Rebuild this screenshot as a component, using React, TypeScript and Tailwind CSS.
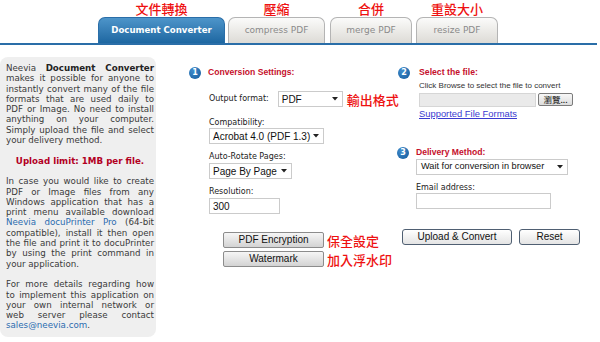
import React from "react";

const vd = "font-['DejaVu_Sans',sans-serif]";
const ar = "font-['Liberation_Sans',Arial,sans-serif]";
const cjk = "font-['Noto_Sans_CJK_TC','Noto_Sans_CJK_SC',sans-serif]";

function Arrow() {
  return (
    <svg width="6" height="4" viewBox="0 0 6 4" className="shrink-0">
      <path d="M0 0H6L3 3.5Z" fill="#222" />
    </svg>
  );
}

function Circle({ n }: { n: string }) {
  return (
    <div
      className={`w-[12px] h-[12px] rounded-full bg-radial-[at_35%_30%] from-[#3f8ccc] to-[#145a9c] text-white text-[8px] font-bold leading-none flex items-center justify-center shrink-0 ${vd}`}
    >
      {n}
    </div>
  );
}

function Line({ children, last }: { children: React.ReactNode; last?: boolean }) {
  return (
    <div className={last ? "text-left" : "text-justify [text-align-last:justify]"}>{children}</div>
  );
}

export default function App() {
  return (
    <div className="w-[600px] h-[342px] bg-white overflow-hidden">
      {/* Header with tabs */}
      <div className="w-[597px] h-[45px] border-b-2 border-[#2a6ea8] flex items-end pl-[98px]">
        <div className="flex flex-col items-center">
          <div className={`h-[17px] text-[13px] leading-[17px] font-medium text-[#ee1111] ${cjk}`}>文件轉換</div>
          <div
            className={`w-[127px] h-[26px] rounded-t-[7px] bg-linear-to-b from-[#4d95ca] to-[#1d67a1] border border-b-0 border-[#2a6ea8] flex items-center justify-center text-white font-bold text-[8.6px] ${vd}`}
          >
            Document Converter
          </div>
        </div>
        <div className="flex flex-col items-center ml-[3px]">
          <div className={`h-[17px] text-[13px] leading-[17px] font-medium text-[#ee1111] ${cjk}`}>壓縮</div>
          <div
            className={`w-[97px] h-[26px] rounded-t-[7px] bg-linear-to-b from-[#fbfbfa] to-[#dddbd6] border border-b-0 border-[#b4b4b4] flex items-center justify-center text-[#8a8a8a] text-[9px] ${vd}`}
          >
            compress PDF
          </div>
        </div>
        <div className="flex flex-col items-center ml-[5px]">
          <div className={`h-[17px] text-[13px] leading-[17px] font-medium text-[#ee1111] ${cjk}`}>合併</div>
          <div
            className={`w-[82px] h-[26px] rounded-t-[7px] bg-linear-to-b from-[#fbfbfa] to-[#dddbd6] border border-b-0 border-[#b4b4b4] flex items-center justify-center text-[#8a8a8a] text-[9px] ${vd}`}
          >
            merge PDF
          </div>
        </div>
        <div className="flex flex-col items-center ml-[4px]">
          <div className={`h-[17px] text-[13px] leading-[17px] font-medium text-[#ee1111] ${cjk}`}>重設大小</div>
          <div
            className={`w-[82px] h-[26px] rounded-t-[7px] bg-linear-to-b from-[#fbfbfa] to-[#dddbd6] border border-b-0 border-[#b4b4b4] flex items-center justify-center text-[#8a8a8a] text-[9px] ${vd}`}
          >
            resize PDF
          </div>
        </div>
      </div>

      {/* Body */}
      <div className="flex">
        {/* Left info panel */}
        <div
          className={`w-[156px] h-[280px] shrink-0 mt-[12px] bg-[#efefef] rounded-[8px] pl-[6px] pr-[2px] pt-[6px] text-[8.7px] leading-[10.3px] text-[#3a3a3a] ${vd}`}
        >
          <div className="mb-[10.3px]">
            <Line>
              Neevia <b className="text-[#222]">Document Converter</b>
            </Line>
            <Line>makes it possible for anyone to</Line>
            <Line>instantly convert many of the file</Line>
            <Line>formats that are used daily to</Line>
            <Line>PDF or Image. No need to install</Line>
            <Line>anything on your computer.</Line>
            <Line>Simply upload the file and select</Line>
            <Line last>your delivery method.</Line>
          </div>
          <div className="mb-[10.3px] text-center font-bold text-[#b3001f]">Upload limit: 1MB per file.</div>
          <div className="mb-[10.3px]">
            <Line>In case you would like to create</Line>
            <Line>PDF or Image files from any</Line>
            <Line>Windows application that has a</Line>
            <Line>print menu available download</Line>
            <Line>
              <span className="text-[#2b6cb0]">Neevia docuPrinter Pro</span> (64-bit
            </Line>
            <Line>compatible), install it then open</Line>
            <Line>the file and print it to docuPrinter</Line>
            <Line>by using the print command in</Line>
            <Line last>your application.</Line>
          </div>
          <div>
            <Line>For more details regarding how</Line>
            <Line>to implement this application on</Line>
            <Line>your own internal network or</Line>
            <Line>web server please contact</Line>
            <Line last>
              <span className="text-[#2b6cb0]">sales@neevia.com</span>.
            </Line>
          </div>
        </div>

        {/* Right form */}
        <div className="pl-[33px]">
          <div className="flex">
            {/* Column 1 */}
            <div className="w-[208px] shrink-0 flex flex-col">
              <div className="mt-[21px] h-[13px] flex items-center">
                <Circle n="1" />
                <span className={`ml-[7px] text-[8.6px] font-bold text-[#c5102c] whitespace-nowrap ${ar}`}>Conversion Settings:</span>
              </div>
              <div className="mt-[12px] h-[16px] ml-[20px] flex items-center whitespace-nowrap">
                <span className={`shrink-0 text-[8px] text-[#222] ${vd}`}>Output format:</span>
                <div className={`shrink-0 ml-[9px] w-[65px] h-[16px] border border-[#cbcbcb] bg-white flex items-center justify-between pl-[3px] pr-[4px] text-[10px] text-[#111] ${ar}`}>
                  <span>PDF</span>
                  <Arrow />
                </div>
                <span className={`shrink-0 ml-[4px] text-[13px] leading-none font-medium text-[#ee1111] ${cjk}`}>輸出格式</span>
              </div>
              <div className={`mt-[11px] ml-[20px] h-[10px] leading-[10px] text-[8px] text-[#222] ${vd}`}>Compatibility:</div>
              <div className={`ml-[20px] w-[115px] h-[16px] border border-[#cbcbcb] bg-white flex items-center justify-between pl-[3px] pr-[4px] text-[10px] text-[#111] whitespace-nowrap ${ar}`}>
                <span>Acrobat 4.0 (PDF 1.3)</span>
                <Arrow />
              </div>
              <div className={`mt-[8px] ml-[20px] h-[10px] leading-[10px] text-[8px] text-[#222] ${vd}`}>Auto-Rotate Pages:</div>
              <div className={`mt-[1px] ml-[20px] w-[83px] h-[16px] border border-[#cbcbcb] bg-white flex items-center justify-between pl-[3px] pr-[4px] text-[10px] text-[#111] whitespace-nowrap ${ar}`}>
                <span>Page By Page</span>
                <Arrow />
              </div>
              <div className={`mt-[8px] ml-[20px] h-[10px] leading-[10px] text-[8px] text-[#222] ${vd}`}>Resolution:</div>
              <div className={`mt-[1px] ml-[20px] w-[71px] h-[16px] border border-[#cbcbcb] bg-white flex items-center pl-[3px] text-[10px] text-[#111] ${ar}`}>
                300
              </div>
            </div>

            {/* Column 2 */}
            <div className="flex flex-col pl-[1px]">
              <div className="mt-[21px] h-[13px] flex items-center">
                <Circle n="2" />
                <span className={`ml-[9px] text-[8.7px] font-bold text-[#c5102c] whitespace-nowrap ${ar}`}>Select the file:</span>
              </div>
              <div className={`mt-[2px] ml-[21px] h-[10px] leading-[10px] text-[8px] text-[#333] whitespace-nowrap ${ar}`}>
                Click Browse to select the file to convert
              </div>
              <div className="mt-[2px] ml-[21px] h-[13px] flex items-center">
                <div className="w-[117px] h-[14px] bg-[#eaeaea] border border-[#d6d6d6]" />
                <div className={`ml-[2px] w-[35px] h-[13px] border border-[#7b7b7b] rounded-[2px] bg-linear-to-b from-[#f8f8f8] to-[#dcdcdc] flex items-center justify-center text-[8.5px] leading-none text-[#111] ${cjk}`}>
                  瀏覽...
                </div>
              </div>
              <div className={`mt-[3px] ml-[21px] h-[10px] leading-[10px] text-[9.4px] text-[#3a3ad0] underline whitespace-nowrap ${ar}`}>
                Supported File Formats
              </div>
              <div className="mt-[27px] h-[13px] flex items-center -ml-[1px]">
                <Circle n="3" />
                <span className={`ml-[7px] text-[8.6px] font-bold text-[#c5102c] whitespace-nowrap ${ar}`}>Delivery Method:</span>
              </div>
              <div className={`ml-[18px] w-[152px] h-[16px] border border-[#cbcbcb] bg-white flex items-center justify-between pl-[4px] pr-[4px] text-[9.2px] text-[#111] whitespace-nowrap ${ar}`}>
                <span>Wait for conversion in browser</span>
                <Arrow />
              </div>
              <div className={`mt-[8px] ml-[18px] h-[10px] leading-[10px] text-[8px] text-[#222] ${vd}`}>Email address:</div>
              <div className="ml-[18px] w-[135px] h-[16px] border border-[#cbcbcb] bg-white" />
            </div>
          </div>

          {/* Buttons row */}
          <div className="flex mt-[15px]">
            <div className="w-[213px] shrink-0 pl-[34px] pt-[3px] flex flex-col gap-[3px]">
              <div className="flex items-center whitespace-nowrap">
                <div className={`shrink-0 w-[101px] h-[16px] border border-[#8c8c8c] rounded-[2px] bg-linear-to-b from-[#f6f6f6] to-[#d3d3d3] flex items-center justify-center text-[10px] leading-none text-[#111] ${ar}`}>
                  PDF Encryption
                </div>
                <span className={`ml-[3px] text-[13px] leading-none font-medium text-[#ee1111] ${cjk}`}>保全設定</span>
              </div>
              <div className="flex items-center whitespace-nowrap">
                <div className={`shrink-0 w-[101px] h-[16px] border border-[#8c8c8c] rounded-[2px] bg-linear-to-b from-[#f6f6f6] to-[#d3d3d3] flex items-center justify-center text-[10px] leading-none text-[#111] ${ar}`}>
                  Watermark
                </div>
                <span className={`ml-[3px] text-[13px] leading-none font-medium text-[#ee1111] ${cjk}`}>加入浮水印</span>
              </div>
            </div>
            <div className="flex items-start gap-[7px]">
              <div className={`w-[110px] h-[16px] border border-[#4f5f72] rounded-[3px] bg-linear-to-b from-[#ffffff] to-[#e4e4e4] flex items-center justify-center text-[10px] leading-none text-[#111] whitespace-nowrap ${ar}`}>
                Upload &amp; Convert
              </div>
              <div className={`w-[61px] h-[16px] border border-[#4f5f72] rounded-[3px] bg-linear-to-b from-[#ffffff] to-[#e4e4e4] flex items-center justify-center text-[10px] leading-none text-[#111] ${ar}`}>
                Reset
              </div>
            </div>
          </div>
        </div>
      </div>
    </div>
  );
}
